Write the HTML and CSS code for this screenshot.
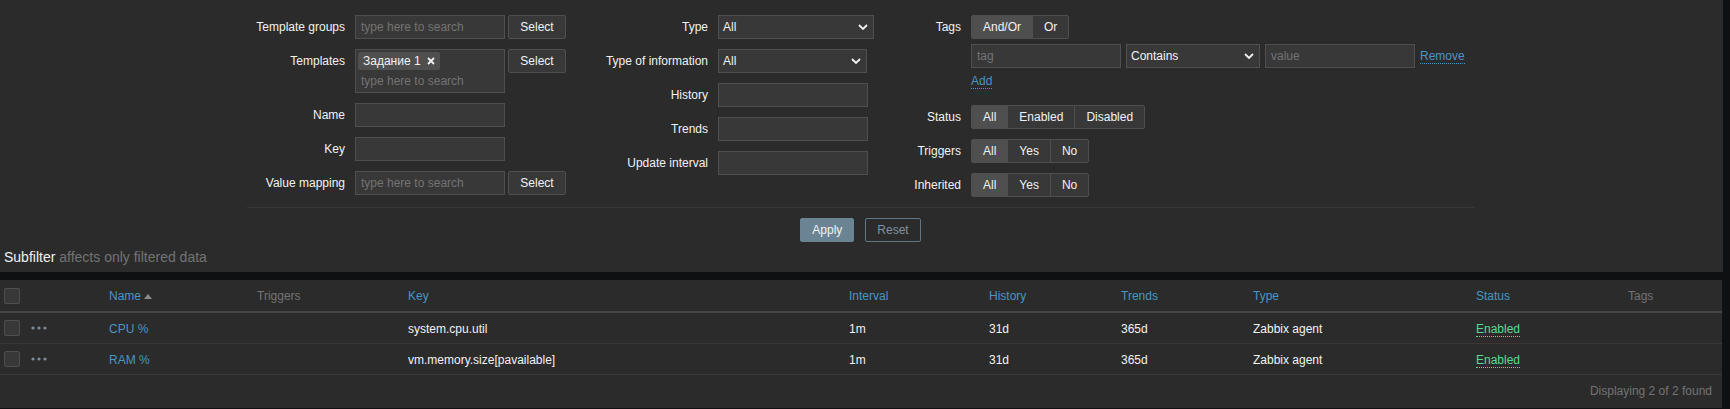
FILE: index.html
```html
<!DOCTYPE html>
<html lang="en">
<head>
<meta charset="utf-8">
<title>Items</title>
<link rel="stylesheet" href="styles.css">
</head>
<body>
<div class="filter-panel">
  <div class="filter-body">
    <div class="filter-columns">
      <div class="fcol fcol-1">
        <div class="flabel">Template groups</div>
        <div class="field">
          <div class="input ph">type here to search</div>
          <button class="btn-select">Select</button>
        </div>
        <div class="flabel">Templates</div>
        <div class="field">
          <div class="ms">
            <span class="chip">Задание 1<svg class="chip-x" width="8" height="8" viewBox="0 0 8 8"><path d="M1 1L7 7M7 1L1 7" stroke="#f2f2f2" stroke-width="1.8" fill="none"/></svg></span>
            <div class="ms-input ph">type here to search</div>
          </div>
          <button class="btn-select">Select</button>
        </div>
        <div class="flabel">Name</div>
        <div class="field"><div class="input"></div></div>
        <div class="flabel">Key</div>
        <div class="field"><div class="input"></div></div>
        <div class="flabel">Value mapping</div>
        <div class="field">
          <div class="input ph">type here to search</div>
          <button class="btn-select">Select</button>
        </div>
      </div>

      <div class="fcol fcol-2">
        <div class="flabel">Type</div>
        <div class="field"><div class="select w156"><span>All</span><svg class="chev" width="10" height="6" viewBox="0 0 10 6"><path d="M1 1L5 5L9 1" stroke="#f2f2f2" stroke-width="1.8" fill="none"/></svg></div></div>
        <div class="flabel">Type of information</div>
        <div class="field"><div class="select w149"><span>All</span><svg class="chev" width="10" height="6" viewBox="0 0 10 6"><path d="M1 1L5 5L9 1" stroke="#f2f2f2" stroke-width="1.8" fill="none"/></svg></div></div>
        <div class="flabel">History</div>
        <div class="field"><div class="input"></div></div>
        <div class="flabel">Trends</div>
        <div class="field"><div class="input"></div></div>
        <div class="flabel">Update interval</div>
        <div class="field"><div class="input"></div></div>
      </div>

      <div class="fcol fcol-3">
        <div class="flabel">Tags</div>
        <div class="field tags-field">
          <div class="radio">
            <span class="seg on">And/Or</span><span class="seg">Or</span>
          </div>
          <div class="tag-row">
            <div class="input ph">tag</div>
            <div class="select w134"><span>Contains</span><svg class="chev" width="10" height="6" viewBox="0 0 10 6"><path d="M1 1L5 5L9 1" stroke="#f2f2f2" stroke-width="1.8" fill="none"/></svg></div>
            <div class="input ph">value</div>
            <a class="link">Remove</a>
          </div>
          <div class="add-row"><a class="link">Add</a></div>
        </div>
        <div class="flabel">Status</div>
        <div class="field">
          <div class="radio"><span class="seg on">All</span><span class="seg">Enabled</span><span class="seg">Disabled</span></div>
        </div>
        <div class="flabel">Triggers</div>
        <div class="field">
          <div class="radio"><span class="seg on">All</span><span class="seg">Yes</span><span class="seg">No</span></div>
        </div>
        <div class="flabel">Inherited</div>
        <div class="field">
          <div class="radio"><span class="seg on">All</span><span class="seg">Yes</span><span class="seg">No</span></div>
        </div>
      </div>
    </div>
    <div class="filter-buttons">
      <button class="btn-apply">Apply</button>
      <button class="btn-reset">Reset</button>
    </div>
  </div>
  <div class="subfilter"><span class="sf-title">Subfilter</span> <span class="sf-hint">affects only filtered data</span></div>
</div>

<div class="list-panel">
  <table class="list">
    <colgroup>
      <col class="c1"><col class="c2"><col class="c3"><col class="c4"><col class="c5"><col class="c6"><col class="c7"><col class="c8"><col class="c9"><col class="c10"><col class="c11">
    </colgroup>
    <thead>
      <tr>
        <th><span class="cb"></span></th>
        <th></th>
        <th><a class="th-link">Name</a><span class="sort-up"></span></th>
        <th class="th-plain">Triggers</th>
        <th><a class="th-link">Key</a></th>
        <th><a class="th-link">Interval</a></th>
        <th><a class="th-link">History</a></th>
        <th><a class="th-link">Trends</a></th>
        <th><a class="th-link">Type</a></th>
        <th><a class="th-link">Status</a></th>
        <th class="th-plain">Tags</th>
      </tr>
    </thead>
    <tbody>
      <tr>
        <td><span class="cb"></span></td>
        <td><svg class="dots" width="16" height="4" viewBox="0 0 16 4"><circle cx="2" cy="2" r="1.6"/><circle cx="8" cy="2" r="1.6"/><circle cx="14" cy="2" r="1.6"/></svg></td>
        <td><a class="name-link">CPU %</a></td>
        <td></td>
        <td>system.cpu.util</td>
        <td>1m</td>
        <td>31d</td>
        <td>365d</td>
        <td>Zabbix agent</td>
        <td><a class="enabled">Enabled</a></td>
        <td></td>
      </tr>
      <tr>
        <td><span class="cb"></span></td>
        <td><svg class="dots" width="16" height="4" viewBox="0 0 16 4"><circle cx="2" cy="2" r="1.6"/><circle cx="8" cy="2" r="1.6"/><circle cx="14" cy="2" r="1.6"/></svg></td>
        <td><a class="name-link">RAM %</a></td>
        <td></td>
        <td>vm.memory.size[pavailable]</td>
        <td>1m</td>
        <td>31d</td>
        <td>365d</td>
        <td>Zabbix agent</td>
        <td><a class="enabled">Enabled</a></td>
        <td></td>
      </tr>
    </tbody>
  </table>
  <div class="paging">Displaying 2 of 2 found</div>
</div>
</body>
</html>
```

FILE: styles.css
```css
* { box-sizing: border-box; }

html, body {
  margin: 0;
  padding: 0;
}

body {
  background: #0e1012;
  color: #f2f2f2;
  font-family: "Liberation Sans", Arial, sans-serif;
  font-size: 12px;
  width: 1730px;
  height: 409px;
  overflow: hidden;
}

button {
  font-family: inherit;
  font-size: 12px;
  margin: 0;
}

/* ---------- filter ---------- */
.filter-panel {
  width: 1723px;
  height: 272px;
  background: #2b2b2b;
}

.filter-body {
  margin-left: 247px;
  width: 1227px;
  padding-top: 15px;
}

.filter-columns {
  display: flex;
  align-items: flex-start;
}

.fcol {
  display: grid;
  column-gap: 10px;
  row-gap: 10px;
  align-items: start;
}

.fcol-1 { width: 330px; grid-template-columns: 98px auto; }
.fcol-2 { width: 303px; grid-template-columns: 131px auto; }
.fcol-3 { grid-template-columns: 81px auto; }

.flabel {
  text-align: right;
  padding-top: 1px;
  line-height: 23px;
  white-space: nowrap;
  color: #f2f2f2;
}

.field {
  display: flex;
  align-items: flex-start;
  gap: 3px;
}

.input {
  width: 150px;
  height: 24px;
  background: #383838;
  border: 1px solid #4f4f4f;
  padding: 0 5px;
  line-height: 22px;
  white-space: nowrap;
}

.ph { color: #737373; }

.btn-select {
  width: 58px;
  height: 24px;
  background: #383838;
  border: 1px solid #4f4f4f;
  border-radius: 2px;
  color: #f2f2f2;
  padding: 0;
  line-height: 22px;
}

.ms {
  width: 150px;
  height: 44px;
  background: #383838;
  border: 1px solid #4f4f4f;
  padding: 2px;
}

.chip {
  display: inline-flex;
  align-items: center;
  height: 18px;
  background: #4f4f4f;
  border-radius: 2px;
  padding: 0 5px 0 5px;
  line-height: 18px;
  color: #f2f2f2;
}

.chip-x {
  display: block;
  margin-left: 6px;
}

.ms-input {
  height: 20px;
  line-height: 20px;
  padding-left: 3px;
  margin-top: 1px;
}

.select {
  height: 24px;
  background: #383838;
  border: 1px solid #4f4f4f;
  display: flex;
  align-items: center;
  justify-content: space-between;
  padding: 0 5px 0 4px;
  color: #f2f2f2;
}

.w156 { width: 156px; }
.w149 { width: 149px; }
.w134 { width: 134px; }

.chev { display: block; }

.tags-field {
  flex-direction: column;
  gap: 0;
}

.radio {
  display: inline-flex;
  height: 24px;
  border: 1px solid #4f4f4f;
  border-radius: 2px;
  overflow: hidden;
}

.seg {
  display: block;
  padding: 0 11px;
  line-height: 22px;
  background: #383838;
  border-left: 1px solid #4f4f4f;
  color: #f2f2f2;
}

.seg:first-child { border-left: none; }
.seg.on { background: #4f4f4f; }

.tag-row {
  display: flex;
  align-items: center;
  gap: 5px;
  margin-top: 5px;
  height: 24px;
}

.link {
  display: inline-block;
  color: #4796c4;
  line-height: 14px;
  border-bottom: 1px dotted #4796c4;
  cursor: pointer;
}

.add-row {
  padding: 6px 0 6px 0;
  height: 27px;
}

.filter-buttons {
  margin-top: 10px;
  border-top: 1px solid #383838;
  padding-top: 10px;
  display: flex;
  justify-content: center;
  gap: 11px;
}

.btn-apply {
  height: 24px;
  padding: 1px 11px 0;
  background: #6a8494;
  border: 1px solid #6a8494;
  border-radius: 2px;
  color: #f2f2f2;
  line-height: 21px;
}

.btn-reset {
  height: 24px;
  padding: 1px 11px 0;
  background: transparent;
  border: 1px solid #5f7785;
  border-radius: 2px;
  color: #7f929e;
  line-height: 21px;
}

.subfilter {
  margin-top: 7px;
  padding-left: 4px;
  font-size: 14px;
  line-height: 16px;
}

.sf-title { color: #f2f2f2; }
.sf-hint { color: #737373; }

/* ---------- list ---------- */
.list-panel {
  margin-top: 8px;
  width: 1722px;
  height: 128px;
  background: #2b2b2b;
}

.list {
  width: 1722px;
  table-layout: fixed;
  border-collapse: separate;
  border-spacing: 0;
}

.c1 { width: 31px; }
.c2 { width: 78px; }
.c3 { width: 148px; }
.c4 { width: 151px; }
.c5 { width: 441px; }
.c6 { width: 140px; }
.c7 { width: 132px; }
.c8 { width: 132px; }
.c9 { width: 223px; }
.c10 { width: 152px; }
.c11 { width: 94px; }

.list th {
  text-align: left;
  font-weight: normal;
  padding: 2px 0 0 0;
  line-height: 29px;
  height: 31px;
  border-bottom: 2px solid #454545;
  white-space: nowrap;
  vertical-align: middle;
}

.list td {
  padding: 2px 0 0 0;
  line-height: 28px;
  height: 30px;
  border-bottom: 1px solid #383838;
  white-space: nowrap;
  vertical-align: middle;
  color: #f2f2f2;
}

.th-link { color: #4796c4; }
.th-plain { color: #737373; }

.sort-up {
  display: inline-block;
  width: 0;
  height: 0;
  border-left: 4px solid transparent;
  border-right: 4px solid transparent;
  border-bottom: 5px solid #8a8a8a;
  margin-left: 3px;
  vertical-align: 1px;
}

.cb {
  display: block;
  width: 16px;
  height: 16px;
  background: #383838;
  border: 1px solid #4f4f4f;
  border-radius: 2px;
  margin-left: 4px;
}

.list th .cb { margin-top: 6px; margin-bottom: 7px; }
.list td .cb { margin-top: 5px; margin-bottom: 7px; }

.dots {
  display: block;
  fill: #7e8c98;
  margin-bottom: 2px;
}

.name-link { color: #4796c4; }

.enabled {
  color: #59db8f;
  border-bottom: 1px dotted #59db8f;
  line-height: 14px;
  display: inline-block;
}

.paging {
  height: 33px;
  padding-top: 1px;
  line-height: 30px;
  text-align: right;
  padding-right: 10px;
  color: #737373;
}
```
